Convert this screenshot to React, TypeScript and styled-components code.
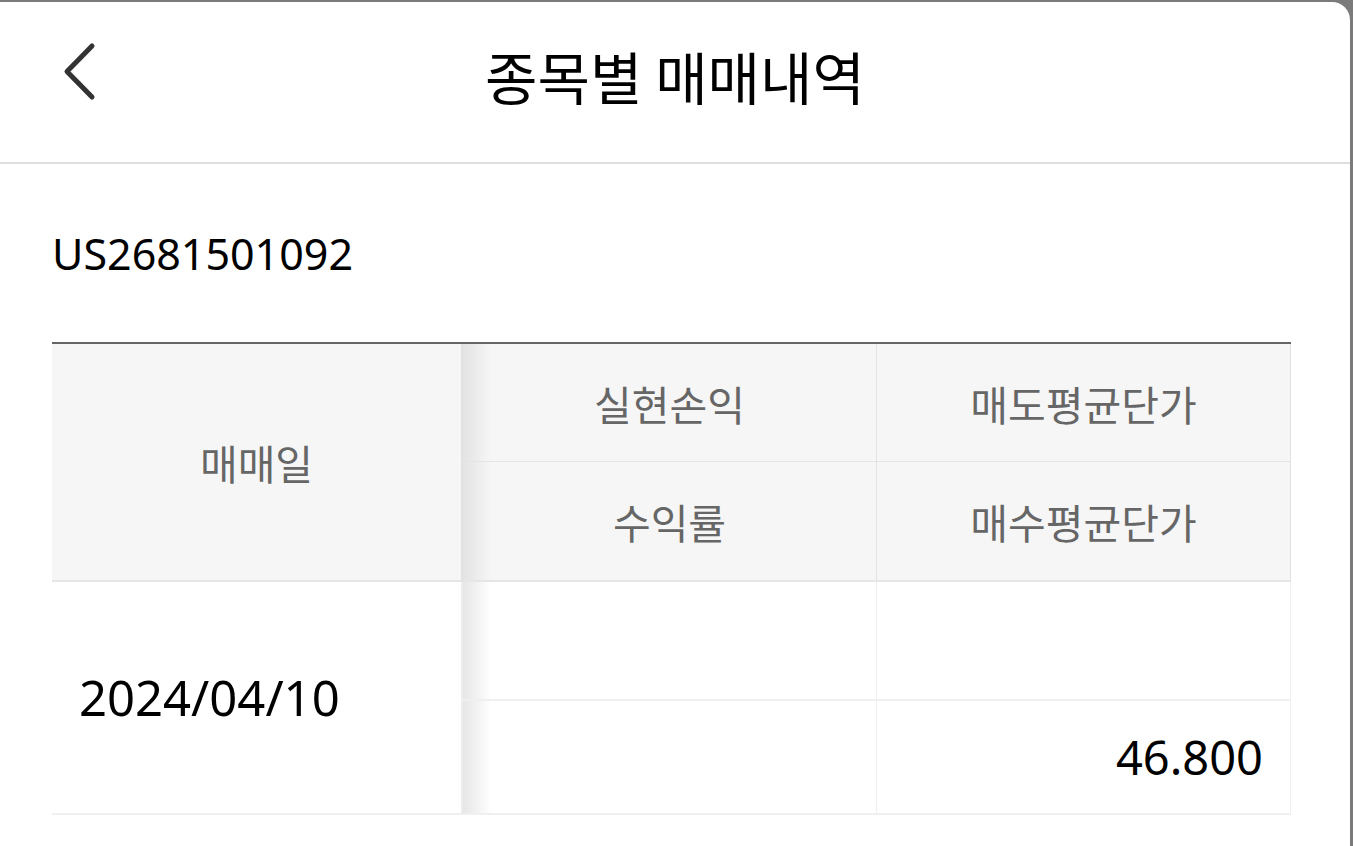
import React from "react";
import styled, { createGlobalStyle, css } from "styled-components";

const GlobalStyle = createGlobalStyle`
    html, body {
        margin: 0;
        padding: 0;
        background: #7b7b7b;
        font-family: "Noto Sans", "Noto Sans CJK KR", sans-serif;
    }
    * {
        box-sizing: border-box;
    }
`;

interface ICell {
    head?: boolean;
    shaded?: boolean;
    last?: boolean;
    align?: "left" | "center" | "right";
}

const Sheet = styled.div`
    margin: 2px 3px 0 0;
    height: 844px;
    background: #fff;
    border-top-right-radius: 18px;
    overflow: hidden;
`;

const Header = styled.header`
    height: 162px;
    border-bottom: 2px solid #dedede;
    display: grid;
    grid-template-columns: 160px 1fr 160px;
    align-items: center;
`;

const BackButton = styled.button`
    border: none;
    background: none;
    padding: 0 0 20px 58px;
    display: flex;
    align-items: center;
    height: 100%;
    cursor: pointer;
`;

const Title = styled.h1`
    margin: 0 0 14px;
    text-align: center;
    font-family: "Noto Sans CJK KR", sans-serif;
    font-size: 57px;
    font-weight: 400;
    line-height: 1;
    color: #000;
`;

const Body = styled.section`
    padding: 68px 59px 0 52px;
`;

const Code = styled.div`
    font-size: 43px;
    color: #000;
    line-height: 1;
    margin-bottom: 67px;
`;

const Grid = styled.div`
    display: grid;
    grid-template-columns: 411px 1fr 1fr;
    grid-template-rows: 118px 120px 119px 114px;
    border-top: 2px solid #666;
`;

const Cell = styled.div<ICell>`
    display: flex;
    align-items: center;
    padding: 0 27px;
    justify-content: ${({ align }) =>
        align === "left" ? "flex-start" : align === "right" ? "flex-end" : "center"};
    font-family: "Noto Sans", "Noto Sans CJK KR", sans-serif;

    ${({ head }) =>
        head
            ? css`
                  background-color: #f6f6f6;
                  color: #666;
                  font-family: "Noto Sans CJK KR", sans-serif;
                  font-size: 41px;
                  border-right: 1px solid #e2e2e2;
                  border-bottom: 1px solid #e4e4e4;
              `
            : css`
                  background-color: #fff;
                  color: #000;
                  font-size: 47px;
                  border-right: 1px solid #efefef;
                  border-bottom: 2px solid #f0f0f0;
              `}

    ${({ shaded, head }) =>
        shaded &&
        css`
            background-image: linear-gradient(
                to right,
                ${head ? "#e3e3e3" : "#e6e6e6"},
                rgba(255, 255, 255, 0) 28px
            );
        `}

    ${({ last }) =>
        last &&
        css`
            border-bottom-width: 2px;
            border-bottom-color: #e6e6e6;
        `}
`;

const DateCell = styled(Cell)`
    grid-row: span 2;
    border-right: 2px solid #ededed;
    font-size: 49px;
`;

const LabelCell = styled(Cell)`
    grid-row: span 2;
    border-right: 2px solid #e2e2e2;
    border-bottom: 2px solid #e6e6e6;
`;

const Value = styled.span`
    line-height: 1;
`;

function Chevron() {
    return (
        <svg width="40" height="60" viewBox="0 0 40 60" fill="none">
            <path
                d="M34 4 L9 29.5 L34 55"
                stroke="#333"
                strokeWidth="5"
                strokeLinecap="round"
                strokeLinejoin="round"
            />
        </svg>
    );
}

export default function App() {
    return (
        <>
            <GlobalStyle />
            <Sheet>
                <Header>
                    <BackButton aria-label="뒤로">
                        <Chevron />
                    </BackButton>
                    <Title>종목별 매매내역</Title>
                    <div />
                </Header>
                <Body>
                    <Code>US2681501092</Code>
                    <Grid>
                        <LabelCell head>매매일</LabelCell>
                        <Cell head shaded>
                            실현손익
                        </Cell>
                        <Cell head>매도평균단가</Cell>
                        <Cell head shaded last>
                            수익률
                        </Cell>
                        <Cell head last>
                            매수평균단가
                        </Cell>

                        <DateCell align="left">
                            <Value>2024/04/10</Value>
                        </DateCell>
                        <Cell shaded />
                        <Cell />
                        <Cell shaded />
                        <Cell align="right">
                            <Value>46.800</Value>
                        </Cell>
                    </Grid>
                </Body>
            </Sheet>
        </>
    );
}
